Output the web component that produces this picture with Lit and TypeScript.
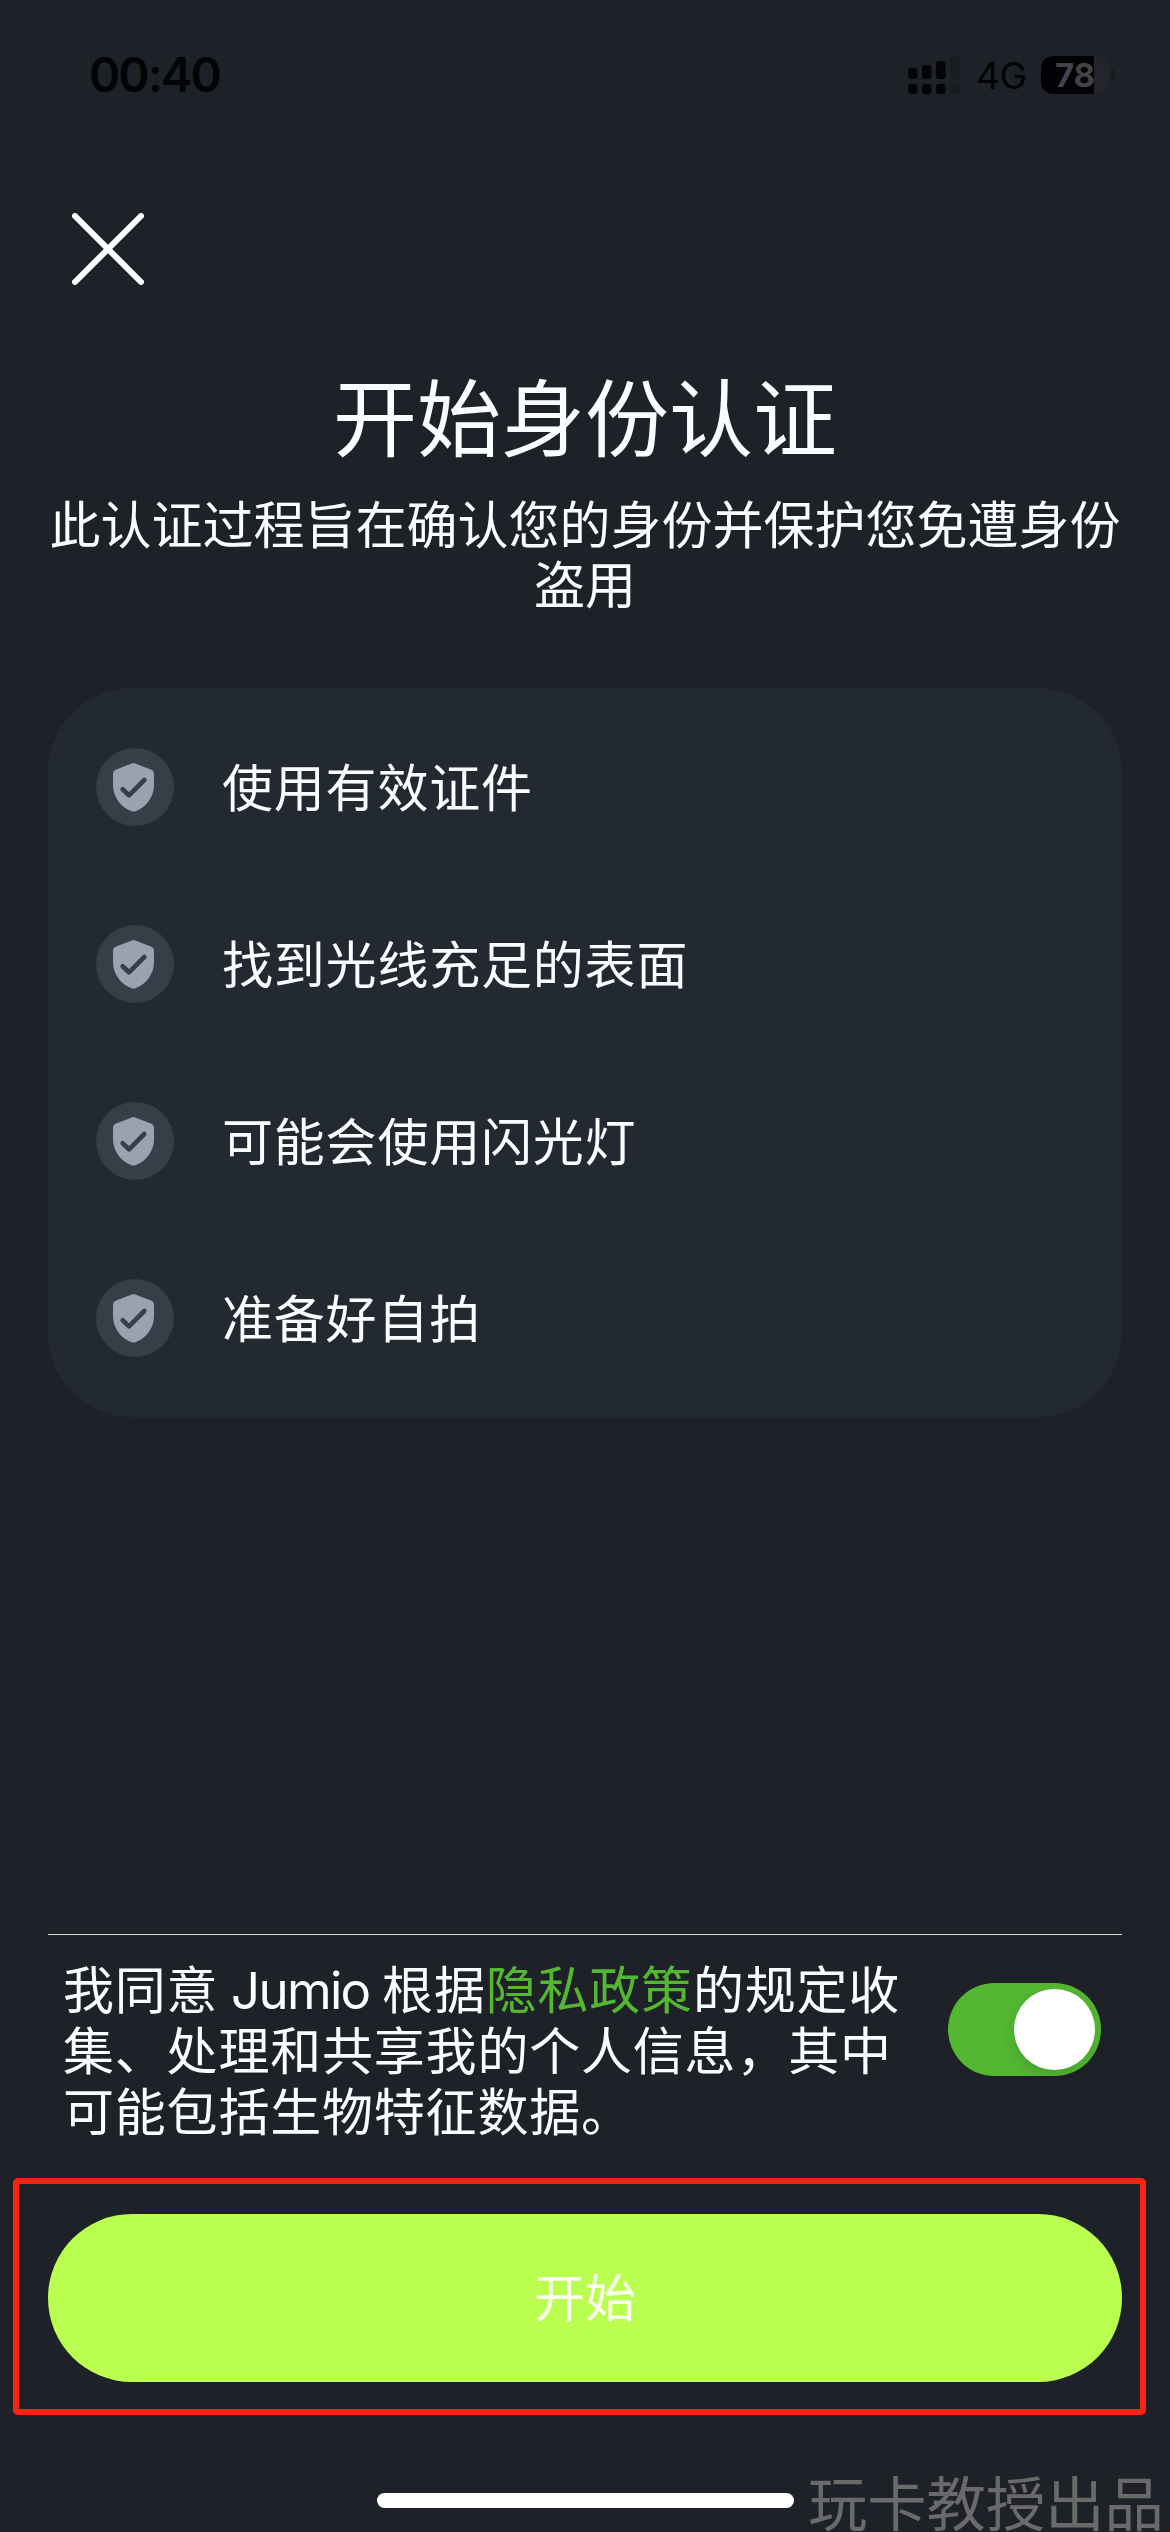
import { LitElement, html, css } from "lit";
import { customElement, property, state } from "lit/decorators.js";

@customElement("status-bar")
class StatusBar extends LitElement {
  static styles = css`
    :host {
      display: flex;
      justify-content: space-between;
      align-items: center;
      height: 149px;
      box-sizing: border-box;
      padding: 0 55px 0 89px;
      color: #020406;
    }
    .time {
      font-size: 47.5px;
      font-weight: 600;
      line-height: 60px;
      letter-spacing: -2px;
    }
    .right {
      display: flex;
      align-items: center;
    }
    .signal {
      display: block;
      margin-right: 16px;
    }
    .network {
      font-size: 37px;
      line-height: 40px;
      letter-spacing: -0.5px;
      width: 50px;
      margin-right: 15px;
      margin-top: 2px;
    }
    .battery {
      width: 68px;
      height: 38px;
      border-radius: 12px;
      background: linear-gradient(90deg, #020205 0 53px, #24252c 53px);
      color: #434347;
      font-size: 33px;
      font-weight: 700;
      line-height: 38px;
      text-align: center;
      text-indent: 0;
    }
    .cap {
      width: 4px;
      height: 13px;
      margin-left: 2px;
      border-radius: 0 4px 4px 0;
      background: #191b21;
    }
  `;

  render() {
    return html`
      <div class="time">00:40</div>
      <div class="right">
        <svg class="signal" width="52" height="38" viewBox="0 0 52 38" fill="#020406">
          <rect x="0" y="12" width="9.5" height="11" rx="3" />
          <rect x="14" y="9" width="9.5" height="14" rx="3" />
          <rect x="28" y="5" width="9.5" height="18" rx="3" />
          <rect x="42" y="1" width="9.5" height="22" rx="3" fill="#1a1c23" />
          <rect x="0" y="28" width="9.5" height="10" rx="3" />
          <rect x="14" y="28" width="9.5" height="10" rx="3" />
          <rect x="28" y="28" width="9.5" height="10" rx="3" />
          <rect x="42" y="28" width="9.5" height="10" rx="3" fill="#1a1c23" />
        </svg>
        <div class="network">4G</div>
        <div class="battery">78</div>
        <div class="cap"></div>
      </div>
    `;
  }
}

@customElement("check-item")
class CheckItem extends LitElement {
  @property() label = "";

  static styles = css`
    :host {
      display: flex;
      align-items: center;
      gap: 48px;
      height: 78px;
    }
    .icon {
      display: block;
      flex: none;
    }
    .label {
      font-size: 51px;
      line-height: 62px;
      letter-spacing: 0.8px;
      white-space: nowrap;
      padding-top: 3px;
    }
  `;

  render() {
    return html`
      <svg class="icon" width="78" height="78" viewBox="0 0 78 78">
        <circle cx="39" cy="39" r="39" fill="#383e48" />
        <path
          d="M35.8 15.4Q37.5 14.6 39.2 15.4L55.5 21.8Q58 22.8 58 25.5V37C58 49 50 59.5 39.5 63.2Q37.5 64 35.5 63.2C25 59.5 17 49 17 37V25.5Q17 22.8 19.5 21.8Z"
          fill="#9ca1b1"
        />
        <path
          d="M26.6 41.300L33 47.300L48.300 32"
          fill="none"
          stroke="#383e4a"
          stroke-width="4.6"
          stroke-linecap="round"
          stroke-linejoin="round"
        />
      </svg>
      <div class="label">${this.label}</div>
    `;
  }
}

@customElement("toggle-switch")
class ToggleSwitch extends LitElement {
  @property({ type: Boolean }) on = false;

  static styles = css`
    :host {
      display: block;
      flex: none;
    }
    .track {
      display: flex;
      justify-content: flex-end;
      width: 153px;
      height: 93px;
      box-sizing: border-box;
      padding: 6px;
      border-radius: 47px;
      background: #53b732;
    }
    .track.off {
      justify-content: flex-start;
      background: #4a4e57;
    }
    .knob {
      width: 81px;
      height: 81px;
      border-radius: 50%;
      background: #ffffff;
      box-shadow: 0 6px 14px rgba(0, 0, 0, 0.12);
    }
  `;

  render() {
    return html`<div class="track ${this.on ? "" : "off"}"><div class="knob"></div></div>`;
  }
}

@customElement("app-root")
class AppRoot extends LitElement {
  @state() private steps = ["使用有效证件", "找到光线充足的表面", "可能会使用闪光灯", "准备好自拍"];

  static styles = css`
    :host {
      display: block;
      font-family: Inter, "Noto Sans CJK SC", sans-serif;
      color: #fafdff;
    }
    .screen {
      position: relative;
      display: flex;
      flex-direction: column;
      width: 1170px;
      height: 2532px;
      overflow: hidden;
      background: #1e2228;
    }
    .close {
      display: block;
      margin: 64px 0 0 72px;
    }
    .title {
      margin: 85px 0 0;
      font-size: 84px;
      font-weight: 400;
      line-height: 100px;
      text-align: center;
    }
    .subtitle {
      margin: 26px 48px 0;
      font-size: 51px;
      line-height: 60px;
      text-align: center;
    }
    .card {
      display: flex;
      flex-direction: column;
      gap: 99px;
      margin: 72px 48px 0;
      padding: 60px 48px;
      border-radius: 84px;
      background: #222930;
    }
    .bottom {
      margin-top: auto;
    }
    .consent {
      display: flex;
      align-items: flex-start;
      justify-content: space-between;
      height: 244px;
      box-sizing: border-box;
      margin: 0 48px;
      padding: 25px 21px 0 15px;
      border-top: 1px solid #d5dade;
    }
    .consent-text {
      font-size: 51px;
      line-height: 61.2px;
      letter-spacing: 0.8px;
      white-space: nowrap;
    }
    .brand {
      letter-spacing: -1.7px;
    }
    .link {
      color: #53b732;
    }
    .toggle {
      margin-top: 23px;
    }
    .highlight {
      margin: 0 24px 0 13px;
      padding: 30px 18px 27px 29px;
      border: 6px solid #fa2314;
      border-radius: 5px;
    }
    .start {
      display: block;
      width: 100%;
      height: 168px;
      padding: 2px 0 0;
      border: 0;
      border-radius: 84px;
      background: #baff50;
      color: #fbfff0;
      font: inherit;
      font-size: 51px;
      line-height: 166px;
      text-align: center;
    }
    .home {
      width: 417px;
      height: 15px;
      margin: 78px auto 24px;
      border-radius: 8px;
      background: #ffffff;
    }
    .watermark {
      position: absolute;
      left: 808px;
      bottom: 0;
      font-size: 59.3px;
      line-height: 54px;
      white-space: nowrap;
      color: #6a6a6a;
    }
  `;

  render() {
    return html`
      <div class="screen">
        <status-bar></status-bar>
        <svg class="close" width="72" height="72" viewBox="0 0 72 72" fill="none" stroke="#fcffff" stroke-width="6" stroke-linecap="round">
          <path d="M3 3L69 69M69 3L3 69" />
        </svg>
        <h1 class="title">开始身份认证</h1>
        <div class="subtitle">此认证过程旨在确认您的身份并保护您免遭身份<br />盗用</div>
        <div class="card">${this.steps.map((s) => html`<check-item .label=${s}></check-item>`)}</div>
        <div class="bottom">
          <div class="consent">
            <div class="consent-text">
              我同意<span class="brand"> Jumio </span>根据<span class="link">隐私政策</span>的规定收<br />集、处理和共享我的个人信息，其中<br />可能包括生物特征数据。
            </div>
            <toggle-switch class="toggle" .on=${true}></toggle-switch>
          </div>
          <div class="highlight"><button class="start">开始</button></div>
          <div class="home"></div>
        </div>
        <div class="watermark">玩卡教授出品</div>
      </div>
    `;
  }
}
